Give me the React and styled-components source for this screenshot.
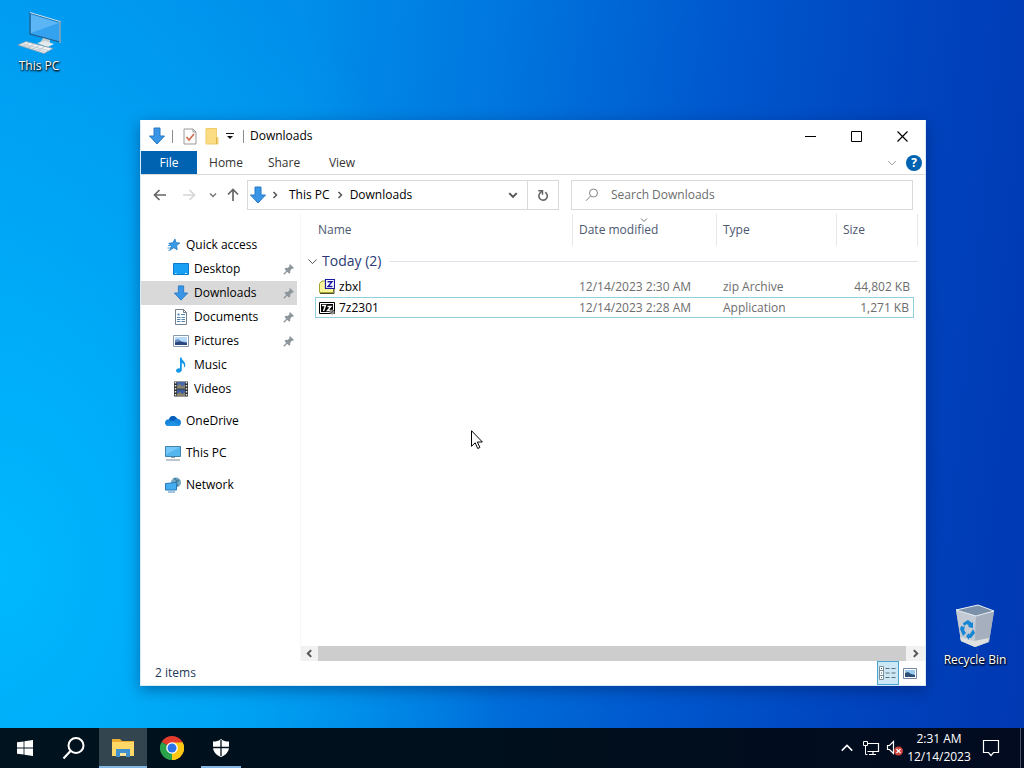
import React, { useState } from 'react';
import styled, { createGlobalStyle, css } from 'styled-components';

const GlobalStyle = createGlobalStyle`
  * {
    box-sizing: border-box;
  }

  body {
    margin: 0;
    font-family: "Open Sans", "Noto Sans", sans-serif;
    font-size: 12px;
    line-height: 16px;
    color: #000;
  }

  button, input {
    font: inherit;
    color: inherit;
  }

  a {
    color: inherit;
    text-decoration: none;
  }
`;

/* ---------- icons ---------- */

const DownArrow = ({ size = 18 }) => (
  <svg width={size} height={size} viewBox="0 0 18 18" aria-hidden="true">
    <path d="M6 1h6v8h4.500L9 17 1.500 9H6z" fill="#3996e6" stroke="#2878c4" strokeWidth="1" />
  </svg>
);

const Chevron = ({ dir = 'down', size = 8, color = '#555', width = 1.5 }) => {
  const paths = {
    down: 'M1 2.500l3 3 3-3',
    up: 'M1 5.500l3-3 3 3',
    left: 'M5.500 1l-3 3 3 3',
    right: 'M2.500 1l3 3-3 3',
  };
  return (
    <svg width={size} height={size} viewBox="0 0 8 8" aria-hidden="true">
      <path d={paths[dir]} fill="none" stroke={color} strokeWidth={width * 8 / size} />
    </svg>
  );
};

const Arrow = ({ turn = 0, color = '#666' }) => (
  <svg width="14" height="14" viewBox="0 0 14 14" aria-hidden="true">
    <path d="M13 7H2M6.500 2L1.500 7l5 5" transform={`rotate(${turn} 7 7)`} fill="none" stroke={color} strokeWidth="1.700" />
  </svg>
);

const PropertiesIcon = () => (
  <svg width="14" height="17" viewBox="0 0 14 17" aria-hidden="true">
    <path d="M1 1h9l3 3v12H1z" fill="#fbfbfb" stroke="#9a9a9a" />
    <path d="M10 1v3h3" fill="none" stroke="#9a9a9a" />
    <path d="M3.500 9l2.500 3 5-6" fill="none" stroke="#cf6a4c" strokeWidth="1.600" />
  </svg>
);

const NewFolderIcon = () => (
  <svg width="14" height="17" viewBox="0 0 14 17" aria-hidden="true">
    <path d="M1 .5h10.500v9H13v6.500H1z" fill="#fbdc82" stroke="#efcb6a" />
    <path d="M11.500 9.500v6.500" stroke="#d9b550" />
  </svg>
);

const StarIcon = () => (
  <svg width="16" height="16" viewBox="0 0 16 16" aria-hidden="true">
    <path d="M10 2l.8 3.600 4 .5-3.200 2.400.6 4.200-3.400-2-3.800 2.400 1.300-4.200-2.500-2.600 3.900-.5z" fill="#3c9be6" stroke="#1f78c0" strokeWidth=".8" />
    <path d="M3 8.500h3M2.500 11h3M3.500 13.500h1.500" stroke="#4aa0e0" />
  </svg>
);

const DesktopIcon = () => (
  <svg width="16" height="16" viewBox="0 0 16 16" aria-hidden="true">
    <path d="M.5 2.500h15v11H.5z" fill="#18a0f4" stroke="#0c78c8" />
    <path d="M2 12.500h1.500M12 12.500h2" stroke="#bfe6ff" />
  </svg>
);

const DocumentsIcon = () => (
  <svg width="16" height="16" viewBox="0 0 16 16" aria-hidden="true">
    <path d="M2.500.5h8l3 3v12h-11z" fill="#fff" stroke="#76818c" />
    <path d="M10.500.5v3h3" fill="none" stroke="#76818c" />
    <path d="M4.500 4.500h2v2h-2z" fill="#4c88bb" />
    <path d="M8 5.500h4M4 8.500h3.500M8.500 8.500h3.500M4 10.500h3.500M8.500 10.500h3.500M4 12.500h3.500M8.500 12.500h3.500" stroke="#5085ad" />
  </svg>
);

const PicturesIcon = () => (
  <svg width="16" height="16" viewBox="0 0 16 16" aria-hidden="true">
    <path d="M.5 2.500h15v11H.5z" fill="#fff" stroke="#8798a8" />
    <path d="M2 4h12v8H2z" fill="#b7dafa" />
    <path d="M2 7l3-1 4 2.500 5 .5v3H2z" fill="#6a8fc0" />
    <path d="M2 9.500l5-1 7 1.500v2H2z" fill="#29477d" />
  </svg>
);

const MusicIcon = () => (
  <svg width="16" height="16" viewBox="0 0 16 16" aria-hidden="true">
    <path d="M7 .5h1.500c.3 3 4 3.800 3.800 7.500 0 1.300-.7 2.300-1.500 2.800 1-2.600-.2-4.300-2-5v7.300c0 1.500-1.600 2.600-3.300 2.600S3 14.700 3 13.500s1.200-2.400 4-2.200z" fill="#1497e6" />
  </svg>
);

const VideosIcon = () => (
  <svg width="16" height="16" viewBox="0 0 16 16" aria-hidden="true">
    <path d="M1 .5h14v15H1z" fill="#303030" />
    <path d="M4 1h8v6.500H4z" fill="#4868ac" />
    <path d="M4 8.500h8V15H4z" fill="#3c5ea0" />
    <path d="M4 5l3-2 2 2.500 3-1.500v3.500H4zM4 13l3-2 2 2 3-1.500V15H4z" fill="#8c8468" />
    <path d="M2.500 1v14M13.500 1v14" stroke="#e8e8e8" strokeWidth="1.500" strokeDasharray="1.500 1.500" />
  </svg>
);

const CloudIcon = () => (
  <svg width="16" height="16" viewBox="0 0 16 16" aria-hidden="true">
    <path d="M4 6.200C5 2.600 10 1.500 12 5.600c2.500.2 4 1.700 4 3.800 0 2.300-1.500 3.600-3.500 3.600h-9C1.300 13 0 11.600 0 9.700c0-2 1.700-3.600 4-3.500z" fill="#1583da" />
    <path d="M4 6.200C5 2.600 10 1.500 12 5.600L7.500 8.300z" fill="#0a5db8" />
    <path d="M1 12l6.500-3.700L15 12c-.8.8-1.500 1-2.500 1h-9c-1 0-1.800-.3-2.500-1z" fill="#1f92e4" />
  </svg>
);

const MonitorIcon = () => (
  <svg width="16" height="16" viewBox="0 0 16 16" aria-hidden="true">
    <path d="M.5 1.500h15v10H.5z" fill="#55b5ed" stroke="#3f82ac" />
    <path d="M1 2h14L1 9.500z" fill="#76c8f8" />
    <path d="M6 12.500h4" stroke="#8aa3b3" />
    <path d="M1 15h14" stroke="#7e8b94" />
  </svg>
);

const NetworkIcon = () => (
  <svg width="16" height="16" viewBox="0 0 16 16" aria-hidden="true">
    <circle cx="11" cy="5.500" r="5" fill="#75a9c4" />
    <path d="M9 1.500c2 0 3 2 2 3.500s1.500 2 1.500 4M14 3l-2 2" fill="none" stroke="#3e7994" strokeWidth="1.300" />
    <path d="M.5 6.500l11-1v7.500H.5z" fill="#45aef0" stroke="#2779b8" />
    <path d="M3 15h7" stroke="#408bc4" />
  </svg>
);

const PinIcon = () => (
  <svg width="12" height="12" viewBox="0 0 12 12" aria-hidden="true">
    <path d="M7 1l4 4-1 .8-.8-.2-2 2 .1 2L6.200 10.700 1.500 6l1.200-1.200 2 .1 2-2L6.300 2z" fill="#8d959b" />
    <path d="M4 8l-3.200 3.200" stroke="#8d959b" strokeWidth="1.300" />
  </svg>
);

const ZipIcon = () => (
  <svg width="16" height="16" viewBox="0 0 16 16" aria-hidden="true">
    <path d="M.5 13.500v-9l2.500-2.500h3.500v2h8v9.500z" fill="#f7f79a" stroke="#a3a338" />
    <path d="M1 14.500h14v-9" fill="none" stroke="#4d4d28" />
    <path d="M6.500.5h9v9h-9z" fill="#fff" stroke="#1a1aa6" strokeWidth="1.200" />
    <path d="M8.500 2.700h4.500L9 7.500h4.500" fill="none" stroke="#1a1aa6" strokeWidth="1.400" />
  </svg>
);

const SevenZipIcon = () => (
  <svg width="16" height="16" viewBox="0 0 16 16" aria-hidden="true">
    <path d="M.5 2.500h15v11H.5z" fill="#fff" stroke="#000" />
    <path d="M2 4h12v8H2z" fill="#000" />
    <path d="M3 5.500h3.500L4.500 11M8.500 6.500h3.500l-3.500 4h3" fill="none" stroke="#fff" strokeWidth="1.400" />
    <circle cx="13" cy="12" r="2.500" fill="#8a8f88" />
    <path d="M11 14l4-4" stroke="#4f564e" />
  </svg>
);

const SearchIcon = () => (
  <svg width="14" height="14" viewBox="0 0 14 14" aria-hidden="true">
    <circle cx="8.500" cy="5" r="4" fill="none" stroke="#858585" />
    <path d="M5.600 8L1 12.800" stroke="#858585" />
  </svg>
);

const RefreshIcon = () => (
  <svg width="12" height="12" viewBox="0 0 12 12" aria-hidden="true">
    <path d="M8.200 3.300A4.200 4.200 0 1 1 3.400 3.700L5 2" fill="none" stroke="#666" strokeWidth="1.600" />
    <path d="M1.300 1.700h4.200v4" fill="none" stroke="#666" strokeWidth="1.500" />
  </svg>
);

const DetailsIcon = () => (
  <svg width="18" height="14" viewBox="0 0 18 14" aria-hidden="true">
    <path d="M.5.5h4v13h-4zM.5 4.500h4M.5 9.500h4" fill="#fff" stroke="#7e8e96" />
    <path d="M2 2.500h1M2 7h1M2 11.500h1" stroke="#2e627f" />
    <path d="M6.500 2.500h4M12.500 2.500h4M6.500 7h4M12.500 7h4M6.500 11.500h4M12.500 11.500h4" stroke="#5e6e77" />
  </svg>
);

const LargeViewIcon = () => (
  <svg width="14" height="11" viewBox="0 0 14 11" aria-hidden="true">
    <path d="M.5.5h13v10H.5z" fill="#fff" stroke="#7885a0" />
    <path d="M2 2h10v7H2z" fill="#9ccaf0" />
    <path d="M2 5l3-1 3 2 4 1v2H2z" fill="#2c4f78" />
  </svg>
);

const DesktopPcIcon = () => (
  <svg width="48" height="44" viewBox="0 0 48 44" aria-hidden="true">
    <path d="M15 2l30 9v20L15 23z" fill="#34a2ef" stroke="#235c88" strokeWidth="1.200" />
    <path d="M16 3.500l28 8.500-28 10z" fill="#5cb6f5" />
    <path d="M15 1.500l30 9" stroke="#cbe7f8" />
    <path d="M45 10v22" stroke="#c5d1d6" />
    <path d="M28 27l7 2v4l-5 2-6-2z" fill="#c0cdd5" />
    <path d="M22 32l8-2 9 3-6 3z" fill="#e4e9ec" />
    <path d="M3 34l8-3.500 27 7-9 5z" fill="#f1f3f4" stroke="#8ca0ad" strokeWidth=".8" />
    <path d="M8 33l25 6.500M6 34.200l24 6.500M14 32.200l-6 3M19 33.400l-6 3M24 34.800l-6 3M29 36l-6 3.500" stroke="#b7c2c9" strokeWidth=".8" />
  </svg>
);

const RecycleIcon = () => (
  <svg width="42" height="46" viewBox="0 0 42 46" aria-hidden="true">
    <path d="M2 7l5 31 14 6 14-5 5-31-16-6z" fill="#b8c2cd" opacity=".93" />
    <path d="M2 7l20 6-1 31-14-6z" fill="#c3cad4" />
    <path d="M22 13l18-5-5 31-14 5z" fill="#a6afbd" />
    <path d="M2 7l22-5 16 6-18 5z" fill="#7b91aa" stroke="#e8eef3" />
    <path d="M6 34l14 4 15-3-1 4-13 5-14-6z" fill="#dfe0df" />
    <path d="M9 20l5-3 4 3 1-1 0 6-5-1 1-1-2-2-3 2zM7 23l4 1-1 3 2 3-3 3-3-7zM19 26l2 4-4 5h-2v2l-3-4 3-3v2l3-4z" fill="#1686d4" />
  </svg>
);

const WindowsIcon = () => (
  <svg width="16" height="16" viewBox="0 0 16 16" aria-hidden="true">
    <path d="M0 2.300l6.600-.9v6.200H0zM7.400 1.300L16 0v7.600H7.400zM0 8.400h6.600v6.200L0 13.700zM7.400 8.400H16V16l-8.600-1.300z" fill="#fff" />
  </svg>
);

const TaskSearchIcon = () => (
  <svg width="24" height="24" viewBox="0 0 24 24" aria-hidden="true">
    <circle cx="14" cy="9.500" r="7.500" fill="none" stroke="#fff" strokeWidth="2" />
    <path d="M8.500 15L1.500 22.500" stroke="#fff" strokeWidth="2.200" />
  </svg>
);

const ExplorerIcon = () => (
  <svg width="24" height="20" viewBox="0 0 24 20" aria-hidden="true">
    <path d="M1 1h8l2 2h12v15H1z" fill="#e9ad30" />
    <path d="M1 4h22v14H1z" fill="#ffd868" />
    <path d="M5 11h14v8h-4v-4H9v4H5z" fill="#3f91cf" />
    <path d="M9 15h6v3H9z" fill="#ffe69c" />
  </svg>
);

const ChromeIcon = () => (
  <svg width="24" height="24" viewBox="0 0 24 24" aria-hidden="true">
    <path d="M12 12L1.600 6A12 12 0 0 1 22.400 6z" fill="#e33b2e" />
    <path d="M12 12l10.400-6A12 12 0 0 1 12 24z" fill="#fbc816" />
    <path d="M12 12v12A12 12 0 0 1 1.600 6z" fill="#2ba24c" />
    <path d="M12 6.500h10.600A12 12 0 0 1 12 24l4.800-9.200z" fill="#fbc816" />
    <circle cx="12" cy="12" r="5.800" fill="#fff" />
    <circle cx="12" cy="12" r="4.500" fill="#2d73e8" />
  </svg>
);

const ShieldIcon = () => (
  <svg width="18" height="18" viewBox="0 0 18 18" aria-hidden="true">
    <path d="M9 0c2 1.800 4.800 2.600 8 2.600V8c0 4.500-3 8-8 10-5-2-8-5.500-8-10V2.600C4.200 2.600 7 1.800 9 0z" fill="#fff" />
    <path d="M9 1v16M1 8.500h16" stroke="#00121d" strokeWidth="1.300" />
  </svg>
);

const EthernetIcon = () => (
  <svg width="18" height="16" viewBox="0 0 18 16" aria-hidden="true">
    <path d="M5.500 3.500h11v8h-11v0M11 11.500v3M7 14.500h7" fill="none" stroke="#fff" strokeWidth="1.200" />
    <path d="M1.500 1.500h4v4h-4zM3.500 5.500v9h2" fill="#06111f" stroke="#fff" />
  </svg>
);

const MutedIcon = () => (
  <svg width="18" height="16" viewBox="0 0 18 16" aria-hidden="true">
    <path d="M1.500 5.500h2l4-4v12l-4-4h-2z" fill="none" stroke="#fff" strokeWidth="1.200" />
    <circle cx="12.500" cy="11" r="4.500" fill="#cf4038" />
    <path d="M10.500 9l4 4M14.500 9l-4 4" stroke="#fff" strokeWidth="1.200" />
  </svg>
);

const NotificationIcon = () => (
  <svg width="18" height="18" viewBox="0 0 18 18" aria-hidden="true">
    <path d="M1.500 1.500h15v12h-5l-2.500 3-2.500-3h-5z" fill="none" stroke="#fff" strokeWidth="1.200" />
  </svg>
);

/* ---------- layout ---------- */

const Screen = styled.div`
  display: flex;
  flex-direction: column;
  min-height: 100vh;
`;

const Wallpaper = styled.main`
  position: relative;
  flex: 1;
  overflow: hidden;
  background:
    radial-gradient(ellipse 50% 95% at 0% 78%, rgba(0, 188, 255, 0.9), rgba(0, 170, 250, 0) 100%),
    linear-gradient(96deg, #0096ef 0%, #008eea 28%, #0076de 46%, #0058ce 66%, #0044be 84%, #0038b2 100%);
`;

const Shortcut = styled.button`
  position: absolute;
  display: flex;
  flex-direction: column;
  align-items: center;
  gap: 3px;
  width: 76px;
  padding: 0;
  border: 0;
  background: none;
  color: #fff;
  text-shadow: 0 1px 2px #000, 1px 1px 2px #000;

  ${({ $place }) => $place === 'start' ? css`
    top: 11px;
    left: 1px;
  ` : css`
    right: 11px;
    bottom: 60px;
  `}
`;

const Pointer = styled.svg`
  position: absolute;
  top: 430px;
  left: 471px;
`;

const Window = styled.section`
  position: absolute;
  top: 120px;
  right: 98px;
  bottom: 42px;
  left: 140px;
  display: flex;
  flex-direction: column;
  border: 1px solid #d5ebf8;
  border-top-color: #fff;
  background: #fff;
  box-shadow: 0 4px 14px rgba(0, 20, 70, 0.4);
`;

const TitleBar = styled.header`
  display: flex;
  align-items: center;
  height: 30px;
  padding-left: 7px;
`;

const ToolButton = styled.button`
  display: flex;
  align-items: center;
  justify-content: center;
  width: ${({ $width }) => $width || 20}px;
  height: 100%;
  padding: 0;
  border: 0;
  background: none;
`;

const Rule = styled.span`
  width: 1px;
  height: 13px;
  margin: 0 6px;
  background: #8c8c8c;
`;

const Title = styled.h1`
  flex: 1;
  margin: 0;
  font-size: 12px;
  font-weight: 400;
`;

const Ribbon = styled.nav`
  display: flex;
  height: 24px;
  border-bottom: 1px solid #dadbdc;
`;

const Tab = styled.button`
  width: ${({ $file }) => ($file ? 56 : 58)}px;
  padding: 0;
  border: 0;
  background: ${({ $file }) => ($file ? '#0063b1' : 'none')};
  color: ${({ $file }) => ($file ? '#fff' : '#333')};
`;

const RibbonEnd = styled.div`
  display: flex;
  align-items: center;
  gap: 2px;
  margin-left: auto;
  padding-right: 3px;
`;

const Help = styled.button`
  width: 16px;
  height: 16px;
  padding: 0;
  border: 0;
  border-radius: 50%;
  background: #0063b1;
  color: #fff;
  font-weight: 700;
`;

const AddressRow = styled.div`
  display: flex;
  align-items: center;
  height: 39px;
  padding: 0 12px 0 8px;
`;

const Address = styled.div`
  display: flex;
  flex: 312 1 312px;
  height: 30px;
  margin-right: 12px;
  border: 1px solid #d9d9d9;
`;

const Crumbs = styled.div`
  display: flex;
  flex: 1;
  align-items: center;
  padding-left: 1px;
`;

const Crumb = styled.button`
  padding: 0 6px;
  border: 0;
  background: none;
`;

const Refresh = styled(ToolButton)`
  border-left: 1px solid #d9d9d9;
`;

const SearchBox = styled.label`
  display: flex;
  flex: 342 1 342px;
  align-items: center;
  gap: 12px;
  height: 30px;
  padding-left: 13px;
  border: 1px solid #d9d9d9;
`;

const SearchInput = styled.input`
  flex: 1;
  min-width: 0;
  padding: 0;
  border: 0;
  outline: 0;
  background: none;

  &::placeholder {
    color: #6d6d6d;
    opacity: 1;
  }
`;

const Body = styled.div`
  display: flex;
  flex: 1;
`;

const Sidebar = styled.nav`
  width: 160px;
  padding: 19px 3px 0 0;
  border-right: 1px solid #f7f7f7;
`;

const Place = styled.a`
  display: flex;
  align-items: center;
  gap: 5px;
  height: 24px;
  margin-top: ${({ $root }) => ($root ? 8 : 0)}px;
  padding: 0 2px 0 ${({ $nested }) => ($nested ? 32 : 24)}px;
  background: ${({ $active }) => ($active ? '#d9d9d9' : 'none')};
`;

const PlaceName = styled.span`
  flex: 1;
`;

const Files = styled.div`
  display: flex;
  flex: 1;
  flex-direction: column;
  justify-content: space-between;
`;

const TableArea = styled.div`
  padding: 0 7px 0 6px;
`;

const Table = styled.table`
  width: 100%;
  table-layout: fixed;
  border-spacing: 0;
`;

const HeadCell = styled.th`
  position: relative;
  height: 32px;
  padding: 0 0 0 ${({ $first }) => ($first ? 3 : 6)}px;
  border-right: ${({ $blank }) => ($blank ? 0 : 1)}px solid #e8e8e8;
  color: #4c5870;
  font-weight: 400;
  text-align: left;
`;

const SortMark = styled.span`
  position: absolute;
  top: 2px;
  left: 0;
  display: flex;
  justify-content: center;
  width: 100%;
`;

const SortButton = styled.button`
  padding: 0;
  border: 0;
  background: none;
`;

const GroupCell = styled.th`
  height: 30px;
  padding: 0;
  font-weight: 400;
`;

const GroupButton = styled.button`
  display: flex;
  align-items: center;
  gap: 4px;
  width: 100%;
  padding: 0;
  border: 0;
  background: none;
  color: #2b3a74;
  font-size: 14px;
  line-height: 20px;

  &::after {
    content: "";
    flex: 1;
    height: 1px;
    margin-left: 4px;
    background: #dfe3ea;
  }
`;

const Cell = styled.td`
  height: 21px;
  padding: 0 4px 0 6px;
  border: 0 solid #8fd0dc;
  border-width: ${({ $focused }) => ($focused ? '1px 0' : '0')};
  color: #6d6d6d;
  text-align: ${({ $end }) => ($end ? 'right' : 'left')};

  &:nth-child(2) {
    padding-left: ${({ $focused }) => ($focused ? 3 : 4)}px;
    border-left-width: ${({ $focused }) => ($focused ? 1 : 0)}px;
  }

  &:nth-child(5) {
    border-right-width: ${({ $focused }) => ($focused ? 1 : 0)}px;
  }
`;

const FileName = styled.span`
  display: flex;
  align-items: center;
  gap: 4px;
  color: #000;
`;

const ScrollBar = styled.div`
  display: flex;
  height: 15px;
  background: #f1f1f1;
`;

const Thumb = styled.div`
  flex: 1;
  background: #cdcdcd;
`;

const StatusBar = styled.footer`
  display: flex;
  align-items: center;
  height: 24px;
  padding: 0 4px 0 14px;
  color: #1e395b;
`;

const ViewButton = styled.button`
  display: flex;
  align-items: center;
  justify-content: center;
  width: 22px;
  height: 24px;
  padding: 0;
  border: 1px solid ${({ $on }) => ($on ? '#4aa5cf' : 'transparent')};
  background: ${({ $on }) => ($on ? '#cce8f6' : 'none')};
`;

const Taskbar = styled.footer`
  display: flex;
  height: 40px;
  padding-left: 1px;
  background: linear-gradient(90deg, #00131e, #000f1c 50%, #020b20);
  color: #fff;
`;

const TaskButton = styled.button`
  display: flex;
  align-items: center;
  justify-content: center;
  width: 48px;
  margin-right: 1px;
  padding: 0;
  border: 0;
  background:
    linear-gradient(#84b6e4, #84b6e4) bottom / ${({ $running, $active }) => ($active ? '100%' : $running ? '40px' : '0')} 2px no-repeat,
    ${({ $active }) => ($active ? '#334650' : 'transparent')};
`;

const Tray = styled.div`
  display: flex;
  align-items: center;
  margin-left: auto;
`;

const TrayButton = styled(ToolButton)`
  width: ${({ $wide }) => ($wide ? 40 : 24)}px;
`;

const Clock = styled.time`
  width: 64px;
  line-height: 18px;
  text-align: center;
`;

const ShowDesktop = styled.button`
  width: 4px;
  height: 100%;
  margin-left: 9px;
  padding: 0;
  border: 0;
  border-left: 1px solid #4a5363;
  background: none;
`;

/* ---------- data ---------- */

const places = [
  { name: 'Quick access', icon: <StarIcon /> },
  { name: 'Desktop', icon: <DesktopIcon />, nested: true, pinned: true },
  { name: 'Downloads', icon: <DownArrow size={16} />, nested: true, pinned: true },
  { name: 'Documents', icon: <DocumentsIcon />, nested: true, pinned: true },
  { name: 'Pictures', icon: <PicturesIcon />, nested: true, pinned: true },
  { name: 'Music', icon: <MusicIcon />, nested: true },
  { name: 'Videos', icon: <VideosIcon />, nested: true },
  { name: 'OneDrive', icon: <CloudIcon />, root: true },
  { name: 'This PC', icon: <MonitorIcon />, root: true },
  { name: 'Network', icon: <NetworkIcon />, root: true },
];

const files = [
  { name: 'zbxl', icon: <ZipIcon />, date: '12/14/2023 2:30 AM', type: 'zip Archive', size: '44,802 KB' },
  { name: '7z2301', icon: <SevenZipIcon />, date: '12/14/2023 2:28 AM', type: 'Application', size: '1,271 KB' },
];

const FileTable = () => {
  const [focused, setFocused] = useState('7z2301');

  return (
    <Table>
      <colgroup>
        <col width="8" />
        <col />
        <col width="144" />
        <col width="120" />
        <col width="77" />
        <col width="4" />
      </colgroup>
      <thead>
        <tr>
          <HeadCell as="td" $blank />
          <HeadCell $first><SortButton>Name</SortButton></HeadCell>
          <HeadCell aria-sort="descending">
            <SortMark><Chevron color="#777" width={1} /></SortMark>
            <SortButton>Date modified</SortButton>
          </HeadCell>
          <HeadCell><SortButton>Type</SortButton></HeadCell>
          <HeadCell colSpan="2"><SortButton>Size</SortButton></HeadCell>
        </tr>
      </thead>
      <tbody>
        <tr>
          <GroupCell colSpan="6">
            <GroupButton>
              <Chevron size={11} color="#555" width={1} />
              Today (2)
            </GroupButton>
          </GroupCell>
        </tr>
        {files.map((file) => {
          const on = focused === file.name;
          return (
            <tr key={file.name} onClick={() => setFocused(file.name)}>
              <td />
              <Cell $focused={on}><FileName>{file.icon}{file.name}</FileName></Cell>
              <Cell $focused={on}>{file.date}</Cell>
              <Cell $focused={on}>{file.type}</Cell>
              <Cell $focused={on} $end>{file.size}</Cell>
              <td />
            </tr>
          );
        })}
      </tbody>
    </Table>
  );
};

const Explorer = () => {
  const [place, setPlace] = useState('Downloads');

  return (
    <Window>
      <TitleBar>
        <ToolButton aria-label="Window menu" $width={18}><DownArrow /></ToolButton>
        <Rule />
        <ToolButton aria-label="Properties" $width={22}><PropertiesIcon /></ToolButton>
        <ToolButton aria-label="New folder" $width={22}><NewFolderIcon /></ToolButton>
        <ToolButton aria-label="Customize toolbar" $width={14}>
          <svg width="8" height="8" viewBox="0 0 8 8"><path d="M0 1.500h8" stroke="#111" /><path d="M1 4h6L4 7z" fill="#111" /></svg>
        </ToolButton>
        <Rule />
        <Title>Downloads</Title>
        <ToolButton aria-label="Minimize" $width={46}>
          <svg width="11" height="11"><path d="M0 5.500h11" stroke="#000" /></svg>
        </ToolButton>
        <ToolButton aria-label="Maximize" $width={46}>
          <svg width="11" height="11"><path d="M.5.5h10v10H.5z" fill="none" stroke="#000" /></svg>
        </ToolButton>
        <ToolButton aria-label="Close" $width={46}>
          <svg width="11" height="11"><path d="M.5.5l10 10M10.500.5l-10 10" stroke="#000" strokeWidth="1.200" /></svg>
        </ToolButton>
      </TitleBar>

      <Ribbon>
        <Tab $file>File</Tab>
        <Tab>Home</Tab>
        <Tab>Share</Tab>
        <Tab>View</Tab>
        <RibbonEnd>
          <ToolButton aria-label="Expand ribbon" $width={24}><Chevron size={10} color="#999" width={1} /></ToolButton>
          <Help aria-label="Help">?</Help>
        </RibbonEnd>
      </Ribbon>

      <AddressRow>
        <ToolButton aria-label="Back" $width={22}><Arrow /></ToolButton>
        <ToolButton aria-label="Forward" $width={36}><Arrow turn={180} color="#d6d6d6" /></ToolButton>
        <ToolButton aria-label="Recent locations" $width={12}><Chevron color="#777" /></ToolButton>
        <ToolButton aria-label="Up" $width={28}><Arrow turn={90} /></ToolButton>
        <Address>
          <Crumbs>
            <DownArrow />
            <ToolButton aria-label="Locations" $width={16}><Chevron dir="right" /></ToolButton>
            <Crumb>This PC</Crumb>
            <Chevron dir="right" />
            <Crumb>Downloads</Crumb>
          </Crumbs>
          <ToolButton aria-label="Previous locations" $width={28}><Chevron size={10} width={2} /></ToolButton>
          <Refresh aria-label="Refresh" $width={31}><RefreshIcon /></Refresh>
        </Address>
        <SearchBox>
          <SearchIcon />
          <SearchInput placeholder="Search Downloads" aria-label="Search Downloads" />
        </SearchBox>
      </AddressRow>

      <Body>
        <Sidebar>
          {places.map((item) => (
            <Place
              key={item.name}
              href="#"
              $nested={item.nested}
              $root={item.root}
              $active={place === item.name}
              onClick={() => setPlace(item.name)}
            >
              {item.icon}
              <PlaceName>{item.name}</PlaceName>
              {item.pinned && <PinIcon />}
            </Place>
          ))}
        </Sidebar>
        <Files>
          <TableArea><FileTable /></TableArea>
          <ScrollBar>
            <ToolButton aria-label="Scroll left" $width={17}><Chevron dir="left" size={9} width={2} /></ToolButton>
            <Thumb />
            <ToolButton aria-label="Scroll right" $width={19}><Chevron dir="right" size={9} width={2} /></ToolButton>
          </ScrollBar>
        </Files>
      </Body>

      <StatusBar>
        <PlaceName>2 items</PlaceName>
        <ViewButton aria-label="Details" $on><DetailsIcon /></ViewButton>
        <ViewButton aria-label="Large thumbnails"><LargeViewIcon /></ViewButton>
      </StatusBar>
    </Window>
  );
};

const App = () => (
  <Screen>
    <GlobalStyle />
    <Wallpaper>
      <Shortcut $place="start"><DesktopPcIcon />This PC</Shortcut>
      <Shortcut $place="end"><RecycleIcon />Recycle Bin</Shortcut>
      <Explorer />
      <Pointer width="12" height="20" viewBox="0 0 12 20" aria-hidden="true">
        <path d="M.5.7v15.600l3.700-3.500 2.500 5.700 2.200-1-2.500-5.500h5z" fill="#fff" stroke="#000" />
      </Pointer>
    </Wallpaper>
    <Taskbar>
      <TaskButton aria-label="Start"><WindowsIcon /></TaskButton>
      <TaskButton aria-label="Search"><TaskSearchIcon /></TaskButton>
      <TaskButton aria-label="File Explorer" $active><ExplorerIcon /></TaskButton>
      <TaskButton aria-label="Chrome"><ChromeIcon /></TaskButton>
      <TaskButton aria-label="Security" $running><ShieldIcon /></TaskButton>
      <Tray>
        <TrayButton aria-label="Hidden icons"><Chevron dir="up" size={14} color="#fff" /></TrayButton>
        <TrayButton aria-label="Network"><EthernetIcon /></TrayButton>
        <TrayButton aria-label="Volume"><MutedIcon /></TrayButton>
        <Clock>2:31 AM<br />12/14/2023</Clock>
        <TrayButton aria-label="Notifications" $wide><NotificationIcon /></TrayButton>
        <ShowDesktop aria-label="Show desktop" />
      </Tray>
    </Taskbar>
  </Screen>
);

export default App;
